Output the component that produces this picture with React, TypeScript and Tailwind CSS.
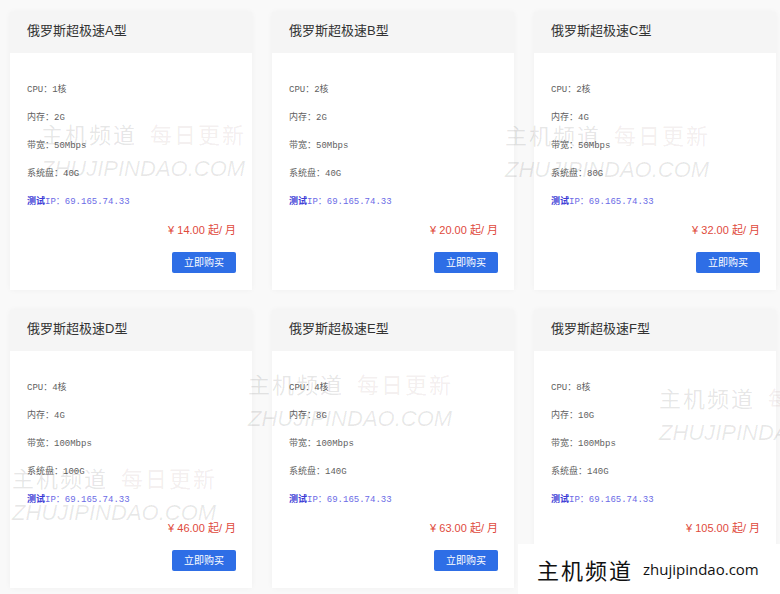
const plans = [
  { name: "俄罗斯超极速A型", cpu: "1核", ram: "2G", bw: "50Mbps", disk: "40G", price: "14.00" },
  { name: "俄罗斯超极速B型", cpu: "2核", ram: "2G", bw: "50Mbps", disk: "40G", price: "20.00" },
  { name: "俄罗斯超极速C型", cpu: "2核", ram: "4G", bw: "50Mbps", disk: "80G", price: "32.00" },
  { name: "俄罗斯超极速D型", cpu: "4核", ram: "4G", bw: "100Mbps", disk: "100G", price: "46.00" },
  { name: "俄罗斯超极速E型", cpu: "4核", ram: "8G", bw: "100Mbps", disk: "140G", price: "63.00" },
  { name: "俄罗斯超极速F型", cpu: "8核", ram: "10G", bw: "100Mbps", disk: "140G", price: "105.00" },
];

const sans = "font-['Liberation_Sans','Noto_Sans_CJK_SC',sans-serif]";
const mono = "font-['Liberation_Mono','Noto_Sans_CJK_SC',monospace]";

function PlanCard({ plan }: { plan: (typeof plans)[number] }) {
  return (
    <div className="flex h-[278px] flex-col bg-white shadow-[0_0_6px_rgba(0,0,0,0.04)]">
      <div className={`flex h-[41px] items-center bg-[#f5f5f5] px-[17px] pb-1 text-[13px] text-[#333] ${sans}`}>
        {plan.name}
      </div>
      <div className="flex flex-1 flex-col px-[17px] pr-4 pt-[23px]">
        <div className={`text-[9px] leading-[28px] text-[#5f5f5f] ${mono}`}>
          <p>CPU：{plan.cpu}</p>
          <p>内存：{plan.ram}</p>
          <p>带宽：{plan.bw}</p>
          <p>系统盘：{plan.disk}</p>
          <p className="text-[#6b6be6]">
            <span className="font-bold text-[#3a3ad6]">测试</span>IP：69.165.74.33
          </p>
        </div>
        <p className={`text-right text-[11px] leading-[28px] text-[#e04a3c] ${sans}`}>
          ¥ {plan.price} 起/ 月
        </p>
        <div className="mt-2 flex justify-end">
          <button className={`h-[21px] w-16 rounded-[2px] bg-[#2e6ee6] text-[10px] text-white ${sans}`}>
            立即购买
          </button>
        </div>
      </div>
    </div>
  );
}

function Watermark({ x, y }: { x: number; y: number }) {
  return (
    <div
      className="pointer-events-none absolute flex flex-col text-[rgba(0,0,0,0.1)]"
      style={{ left: x, top: y }}
    >
      <div className="flex gap-[13px] whitespace-nowrap font-['Noto_Sans_CJK_SC',sans-serif] text-[22px] leading-[24px] tracking-[2px]">
        <span>主机频道</span>
        <span className="text-[rgba(90,20,20,0.08)]">每日更新</span>
      </div>
      <div className="mt-3 whitespace-nowrap font-['Liberation_Sans',sans-serif] text-[22px] italic leading-[24px] text-[rgba(0,0,0,0.09)]">
        ZHUJIPINDAO.COM
      </div>
    </div>
  );
}

export default function App() {
  return (
    <div className="relative h-[594px] w-[780px] overflow-hidden bg-[#f9f9f9] pl-[10px] pt-3">
      <div className="grid grid-cols-[242px_242px_242px] gap-5">
        {plans.map((p) => (
          <PlanCard key={p.name} plan={p} />
        ))}
      </div>

      <Watermark x={41} y={121} />
      <Watermark x={505} y={122} />
      <Watermark x={248} y={371} />
      <Watermark x={12} y={465} />
      <Watermark x={659} y={385} />

      <div className="absolute bottom-0 right-0 flex h-[50px] w-[262px] items-center gap-[10px] bg-white pl-[19px]">
        <span className="font-['Noto_Sans_CJK_SC',sans-serif] text-[22px] tracking-[2px] text-[#111]">主机频道</span>
        <span className="font-['Open_Sans',sans-serif] text-[15px] text-[#111]">zhujipindao.com</span>
      </div>
    </div>
  );
}
